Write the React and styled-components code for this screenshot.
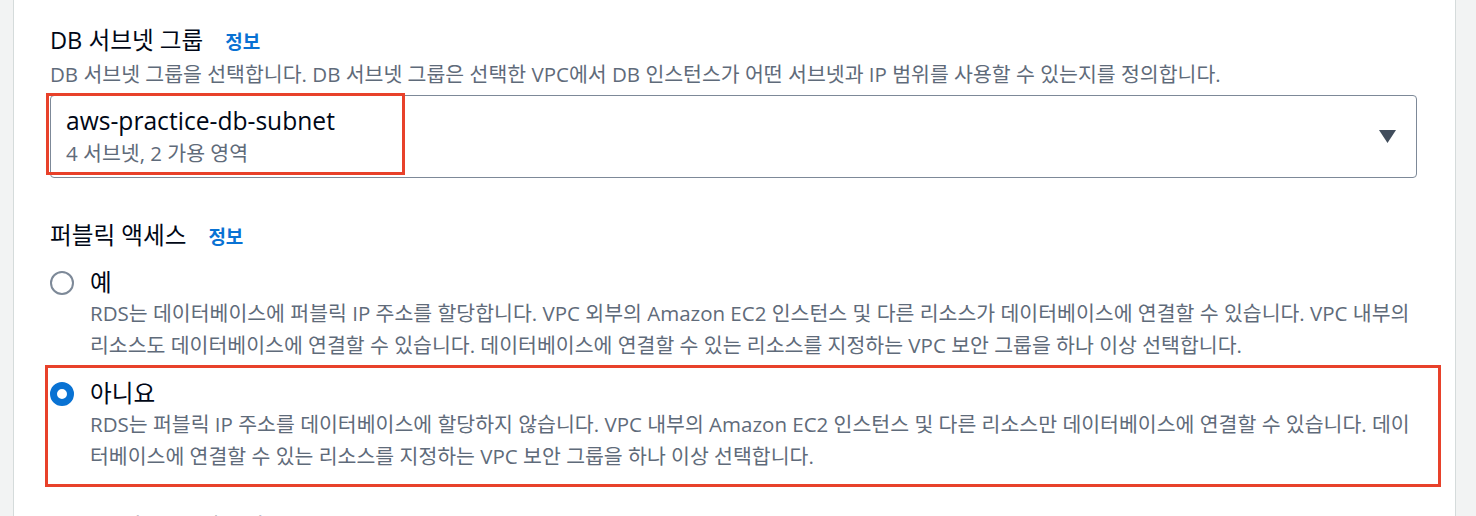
import React from 'react';
import styled, { createGlobalStyle } from 'styled-components';

const GlobalStyle = createGlobalStyle`
  body {
    margin: 0;
    background: #f2f3f3;
    font-family: "Open Sans", "Noto Sans CJK KR", sans-serif;
  }
`

const Page = styled.div`
  display: flex;
  height: 516px;
  overflow: hidden;
`

const Gutter = styled.div`
  flex: 0 0 ${p => p.width}px;
  background: #f2f3f3;
`

const Panel = styled.main`
  flex: 1;
  background: #fff;
  border-left: 1px solid #d5dbdb;
  border-right: 1px solid #d5dbdb;
  padding: 25px 36px 0 36px;
`

const Field = styled.section`
  margin-bottom: ${p => p.gap || 0}px;
`

const Label = styled.div`
  display: flex;
  align-items: baseline;
  gap: 22px;
  font-size: 23.6px;
  line-height: 30px;
  color: #000716;
`

const Info = styled.a`
  font-size: 19px;
  font-weight: 700;
  color: #0972d3;
  text-decoration: none;
`

const Hint = styled.p`
  margin: 3px 0 7px;
  font-size: 20.5px;
  line-height: 28px;
  color: #5f6b7a;
`

const SelectBox = styled.div`
  position: relative;
  display: flex;
  align-items: center;
  justify-content: space-between;
  width: 1367px;
  height: 83px;
  box-sizing: border-box;
  border: 1px solid #7d8998;
  border-radius: 4px;
  padding: 0 20px 0 15px;
`

const SelectText = styled.div`
  display: flex;
  flex-direction: column;
  gap: 2px;
  margin-top: -2px;
`

const SelectMain = styled.span`
  font-size: 24.6px;
  line-height: 32px;
  color: #000716;
`

const SelectSub = styled.span`
  font-size: 20.5px;
  line-height: 28px;
  color: #5f6b7a;
`

const Caret = styled.svg`
  width: 17px;
  height: 13px;
  fill: #414d5c;
`

const Mark = styled.div`
  position: absolute;
  left: ${p => p.left}px;
  top: ${p => p.top}px;
  width: ${p => p.width}px;
  height: ${p => p.height}px;
  border: 3px solid #e8412a;
  box-sizing: border-box;
  pointer-events: none;
`

const Options = styled.div`
  display: flex;
  flex-direction: column;
  gap: 18px;
  margin-top: 16px;
`

const Option = styled.div`
  position: relative;
  display: grid;
  grid-template-columns: 24px 1fr;
  column-gap: 16px;
  width: 1367px;
`

const Radio = styled.span`
  width: 24px;
  height: 24px;
  box-sizing: border-box;
  border-radius: 50%;
  margin-top: 3px;
  border: ${p => (p.checked ? '7px solid #0972d3' : '2px solid #7d8998')};
  background: #fff;
`

const OptionLabel = styled.div`
  font-size: 23.6px;
  line-height: 28px;
  color: #000716;
`

const OptionHint = styled.p`
  grid-column: 2;
  margin: 1px 0 0;
  font-size: 20.5px;
  line-height: 32px;
  color: #5f6b7a;
`

export default function App() {
  return (
    <>
      <GlobalStyle />
      <Page>
        <Gutter width={13} />
        <Panel>
          <Field gap={42}>
            <Label>DB 서브넷 그룹 <Info href="#">정보</Info></Label>
            <Hint>DB 서브넷 그룹을 선택합니다. DB 서브넷 그룹은 선택한 VPC에서 DB 인스턴스가 어떤 서브넷과 IP 범위를 사용할 수 있는지를 정의합니다.</Hint>
            <SelectBox>
              <SelectText>
                <SelectMain>aws-practice-db-subnet</SelectMain>
                <SelectSub>4 서브넷, 2 가용 영역</SelectSub>
              </SelectText>
              <Caret viewBox="0 0 17 13"><path d="M0 0h17L8.5 13z" /></Caret>
              <Mark left={-5} top={-3} width={359} height={82} />
            </SelectBox>
          </Field>
          <Field gap={40}>
            <Label>퍼블릭 액세스 <Info href="#">정보</Info></Label>
            <Options>
              <Option>
                <Radio />
                <OptionLabel>예</OptionLabel>
                <OptionHint>RDS는 데이터베이스에 퍼블릭 IP 주소를 할당합니다. VPC 외부의 Amazon EC2 인스턴스 및 다른 리소스가 데이터베이스에 연결할 수 있습니다. VPC 내부의<br />리소스도 데이터베이스에 연결할 수 있습니다. 데이터베이스에 연결할 수 있는 리소스를 지정하는 VPC 보안 그룹을 하나 이상 선택합니다.</OptionHint>
              </Option>
              <Option>
                <Radio checked />
                <OptionLabel>아니요</OptionLabel>
                <OptionHint>RDS는 퍼블릭 IP 주소를 데이터베이스에 할당하지 않습니다. VPC 내부의 Amazon EC2 인스턴스 및 다른 리소스만 데이터베이스에 연결할 수 있습니다. 데이<br />터베이스에 연결할 수 있는 리소스를 지정하는 VPC 보안 그룹을 하나 이상 선택합니다.</OptionHint>
                <Mark left={-5} top={-14} width={1396} height={122} />
              </Option>
            </Options>
          </Field>
          <Label>VPC 보안 그룹(방화벽) <Info href="#">정보</Info></Label>
        </Panel>
        <Gutter width={20} />
      </Page>
    </>
  );
}
